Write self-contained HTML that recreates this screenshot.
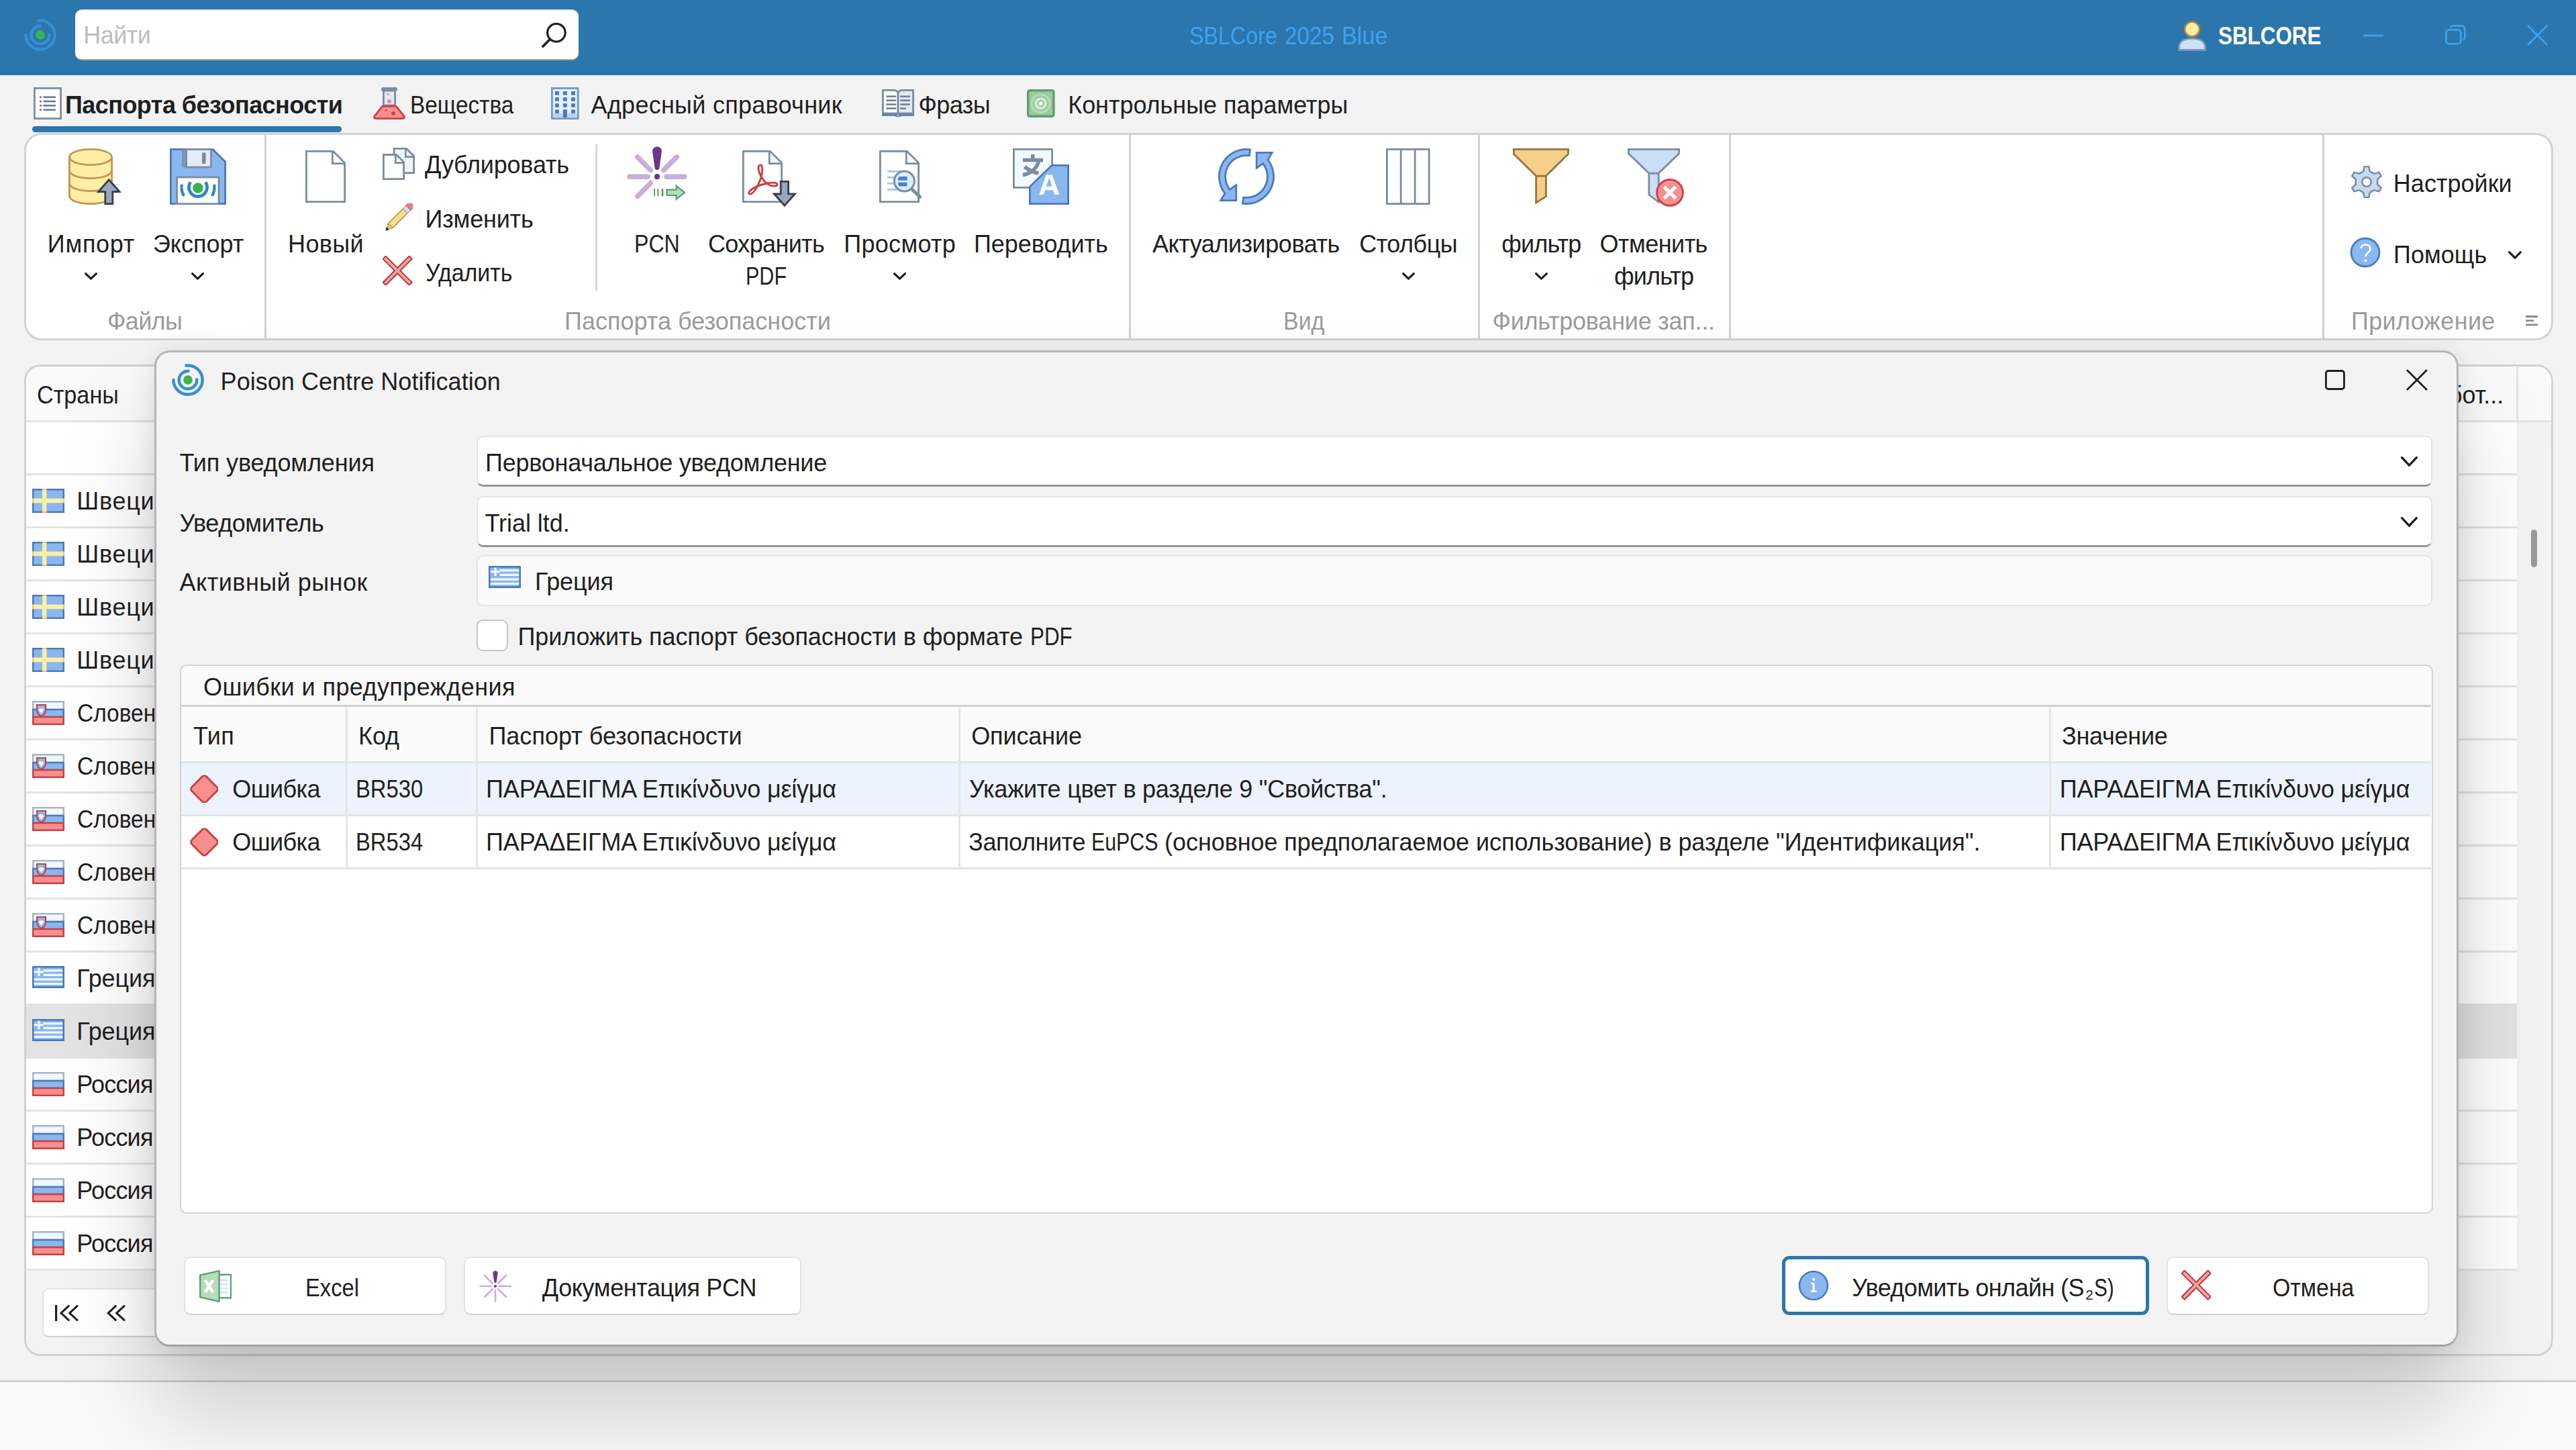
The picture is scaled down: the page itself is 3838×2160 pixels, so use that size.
<!DOCTYPE html>
<html lang="ru"><head><meta charset="utf-8"><title>SBLCore 2025 Blue</title>
<style>
*{box-sizing:border-box;margin:0;padding:0}
html,body{width:3838px;height:2160px;overflow:hidden;background:#f3f3f3}
body{position:relative;font-family:"Liberation Sans",sans-serif;color:#1f1f1f}
div,span.t,svg{position:absolute}
.t{white-space:pre;line-height:1;font-size:36px;transform-origin:0 0}
</style></head><body>
<!-- titlebar -->
<div id="titlebar" style="left:0;top:0;width:3838px;height:2160px">
<div style="left:0px;top:0px;width:3838px;height:112px;background:#2b76ac"></div>
<svg style="left:36px;top:28px" width="48" height="48" viewBox="0 0 48 48"><path d="M21.37 2.56 A21.6 21.6 0 1 1 2.40 24.00" fill="none" stroke="#378fd1" stroke-width="4.2" stroke-linecap="round"/><path d="M37.28 23.30 A13.3 13.3 0 1 1 24.46 10.71" fill="none" stroke="#378fd1" stroke-width="4.2" stroke-linecap="round"/><circle cx="24" cy="24" r="6.8" fill="#3cb44b"/></svg>
<div style="left:112px;top:14px;width:750px;height:76px;background:#fff;border-radius:10px;border-top:2.5px solid #e6e6e6;border-bottom:2.5px solid #a3a3a3"></div>
<svg style="left:803px;top:34px" width="42" height="40" viewBox="0 0 42 40"><circle cx="25.9" cy="14.8" r="13.3" fill="none" stroke="#1f1f1f" stroke-width="3.2"/><path d="M16.3 24.5 L4.8 36.2" stroke="#1f1f1f" stroke-width="3.6" fill="none"/></svg>
<svg style="left:3245px;top:31px" width="42" height="45" viewBox="0 0 42 45"><path d="M1.5 43.4 V40 C1.5 31 9 26.5 21 26.5 S40.5 31 40.5 40 V43.4 Z" fill="#c9e4f9" stroke="#8795c4" stroke-width="2.6"/><circle cx="21" cy="12.5" r="11" fill="#ffeea3" stroke="#a98a3d" stroke-width="2.6"/></svg>
<svg style="left:3521px;top:51.3px" width="30" height="4" viewBox="0 0 30 4"><path d="M0 2 H30" stroke="#3fa1ee" stroke-width="2.8"/></svg>
<svg style="left:3642.5px;top:37px" width="31" height="30" viewBox="0 0 31 30"><rect x="1.4" y="7.4" width="22" height="21" rx="4.5" fill="none" stroke="#3fa1ee" stroke-width="2.8"/><path d="M8 3.6 C8.6 2 10 1.4 12 1.4 H24 C27 1.4 29.4 3.6 29.4 6.6 V18 C29.4 20 28.6 21.6 26.8 22.2" fill="none" stroke="#3fa1ee" stroke-width="2.8"/></svg>
<svg style="left:3764.6px;top:36.5px" width="31" height="31" viewBox="0 0 31 31"><path d="M1 1 L30 30 M30 1 L1 30" stroke="#3fa1ee" stroke-width="2.8" fill="none"/></svg>
<span class="t" style="left:124.2px;top:35px;letter-spacing:-0.53px;color:#bdbdbd;">Найти</span>
<span class="t" style="left:1771.5px;top:36px;transform:scaleX(0.8955);color:#3fa1ee;">SBLCore</span>
<span class="t" style="left:1913.5px;top:36px;transform:scaleX(0.9249);color:#3fa1ee;">2025</span>
<span class="t" style="left:1999.4px;top:36px;transform:scaleX(0.9517);color:#3fa1ee;">Blue</span>
<span class="t" style="left:3305.0px;top:36px;transform:scaleX(0.8713);color:#fff;font-weight:700;">SBLCORE</span>
</div>
<!-- tabs -->
<div id="tabs" style="left:0;top:0;width:3838px;height:2160px">
<svg style="left:49.8px;top:130px" width="42" height="48" viewBox="0 0 42 48"><rect x="1.4" y="1.4" width="39.2" height="45.2" fill="#fff" stroke="#7a8da1" stroke-width="2.8"/><rect x="9" y="13.4" width="3" height="2.6" fill="#6b7c9a"/><rect x="14.5" y="13.4" width="18.5" height="2.6" fill="#6b7c9a"/><rect x="9" y="19.7" width="3" height="2.6" fill="#6b7c9a"/><rect x="14.5" y="19.7" width="18.5" height="2.6" fill="#6b7c9a"/><rect x="9" y="26.0" width="3" height="2.6" fill="#6b7c9a"/><rect x="14.5" y="26.0" width="18.5" height="2.6" fill="#6b7c9a"/><rect x="9" y="32.3" width="3" height="2.6" fill="#6b7c9a"/><rect x="14.5" y="32.3" width="18.5" height="2.6" fill="#6b7c9a"/></svg>
<div style="left:47.7px;top:187.8px;width:461.6px;height:9.2px;background:#2b76ac;border-radius:5px"></div>
<svg style="left:556px;top:130px" width="48" height="48" viewBox="0 0 48 48"><path d="M15.4 5 V27 H32.6 V5 Z" fill="#dfeaf5" stroke="#7a8da1" stroke-width="2.8"/><rect x="12" y="0" width="24" height="6" rx="2.5" fill="#7a8da1"/><path d="M13.6 28.4 H34.4 L46 43 C47 45 46 46.6 44 46.6 H4 C2 46.6 1 45 2 43 Z" fill="#f78f8f" stroke="#c74343" stroke-width="2.8" stroke-linejoin="round"/><circle cx="22.3" cy="10.4" r="1.6" fill="#f78f8f"/><circle cx="24" cy="21" r="3.1" fill="#f78f8f"/><circle cx="19.3" cy="34.2" r="1.4" fill="#c74343"/><circle cx="30" cy="38.8" r="2.9" fill="#c74343"/></svg>
<svg style="left:821.2px;top:130px" width="41.6" height="48" viewBox="0 0 41.6 48"><rect x="1.4" y="1.4" width="38.8" height="45.2" fill="#dff0fe" stroke="#7496c4" stroke-width="2.8"/><rect x="2.8" y="38.8" width="36" height="6.4" fill="#b9d5f2"/><rect x="6" y="6" width="5.9" height="5.6" fill="#4e7ab5"/><rect x="6" y="15.1" width="5.9" height="5.6" fill="#4e7ab5"/><rect x="6" y="24.2" width="5.9" height="5.6" fill="#4e7ab5"/><rect x="6" y="33.3" width="5.9" height="5.6" fill="#4e7ab5"/><rect x="17.9" y="6" width="5.9" height="5.6" fill="#4e7ab5"/><rect x="17.9" y="15.1" width="5.9" height="5.6" fill="#4e7ab5"/><rect x="17.9" y="24.2" width="5.9" height="5.6" fill="#4e7ab5"/><rect x="17.9" y="33.3" width="5.9" height="5.6" fill="#4e7ab5"/><rect x="30" y="6" width="5.9" height="5.6" fill="#4e7ab5"/><rect x="30" y="15.1" width="5.9" height="5.6" fill="#4e7ab5"/><rect x="30" y="24.2" width="5.9" height="5.6" fill="#4e7ab5"/><rect x="30" y="33.3" width="5.9" height="5.6" fill="#4e7ab5"/><rect x="17.9" y="33.3" width="5.9" height="11.9" fill="#4e7ab5"/></svg>
<svg style="left:1314px;top:133px" width="48" height="42" viewBox="0 0 48 42"><path d="M0 36.6 H48 V39.8 H28.4 C27.6 42 20.4 42 19.6 39.8 H0 Z" fill="#4e7ab5"/><circle cx="24" cy="38.6" r="2.3" fill="#8bb7f0"/><path d="M1.4 1.4 H17 C21 1.4 23.2 3.2 24 5.4 V36 H1.4 Z" fill="#fff" stroke="#7a8da1" stroke-width="2.8"/><path d="M46.6 1.4 H31 C27 1.4 24.8 3.2 24 5.4 V36 H46.6 Z" fill="#e0eaf3" stroke="#7a8da1" stroke-width="2.8"/><rect x="6.3" y="9.4" width="14.7" height="2.5" fill="#6b7c9a"/><rect x="27.2" y="9.4" width="14.7" height="2.5" fill="#6b7c9a"/><rect x="6.3" y="15.350000000000001" width="14.7" height="2.5" fill="#6b7c9a"/><rect x="27.2" y="15.350000000000001" width="14.7" height="2.5" fill="#6b7c9a"/><rect x="6.3" y="21.3" width="14.7" height="2.5" fill="#6b7c9a"/><rect x="27.2" y="21.3" width="14.7" height="2.5" fill="#6b7c9a"/><rect x="6.3" y="27.25" width="14.7" height="2.5" fill="#6b7c9a"/><rect x="27.2" y="27.25" width="8.7" height="2.5" fill="#6b7c9a"/></svg>
<svg style="left:1530.3px;top:133px" width="41.6" height="42" viewBox="0 0 41.6 42"><rect x="1.7" y="1.7" width="38.2" height="38.6" rx="2.5" fill="#9bcb9f" stroke="#5f9e6e" stroke-width="3.4"/><circle cx="20.6" cy="21.2" r="13.3" fill="none" stroke="#b9dcbb" stroke-width="2.8"/><circle cx="20.6" cy="21.2" r="7.3" fill="none" stroke="#d9edda" stroke-width="3.4"/><circle cx="20.6" cy="21.2" r="3" fill="#fff"/></svg>
<span class="t" style="left:96.9px;top:139px;letter-spacing:-0.54px;font-weight:700;">Паспорта безопасности</span>
<span class="t" style="left:611.0px;top:139px;transform:scaleX(0.9276);">Вещества</span>
<span class="t" style="left:880.5px;top:139px;letter-spacing:0.28px;">Адресный справочник</span>
<span class="t" style="left:1368.6px;top:139px;letter-spacing:-0.60px;">Фразы</span>
<span class="t" style="left:1591.2px;top:139px;letter-spacing:-0.03px;">Контрольные параметры</span>
</div>
<!-- ribbon -->
<div id="ribbon" style="left:0;top:0;width:3838px;height:2160px">
<div style="left:36px;top:198px;width:3768px;height:309px;background:#fff;border:3px solid #d2d2d2;border-radius:26px"></div>
<div style="left:393.5px;top:201px;width:3px;height:303px;background:#d2d2d2"></div>
<div style="left:1682px;top:201px;width:3px;height:303px;background:#d2d2d2"></div>
<div style="left:2201.5px;top:201px;width:3px;height:303px;background:#d2d2d2"></div>
<div style="left:2575.5px;top:201px;width:3px;height:303px;background:#d2d2d2"></div>
<div style="left:3459.5px;top:201px;width:3px;height:303px;background:#d2d2d2"></div>
<div style="left:887px;top:215px;width:2.5px;height:218px;background:#d8d8d8"></div>
<svg style="left:101.9px;top:221px" width="78" height="84" viewBox="0 0 78 84"><path d="M1.4 13 V71 C1.4 77.5 15.5 82.6 33 82.6 S64.6 77.5 64.6 71 V13" fill="#ffeea3" stroke="#c29653" stroke-width="2.8"/><ellipse cx="33" cy="13" rx="31.6" ry="11.6" fill="#ffeea3" stroke="#c29653" stroke-width="2.8"/><path d="M1.4 33 C1.4 39.5 15.5 44.6 33 44.6 S64.6 39.5 64.6 33" fill="none" stroke="#c29653" stroke-width="2.8"/><path d="M1.4 52 C1.4 58.5 15.5 63.6 33 63.6 S64.6 58.5 64.6 52" fill="none" stroke="#c29653" stroke-width="2.8"/><path d="M60.2 46.8 L76 64.6 H65.8 V82.6 H54.8 V64.6 H44.6 Z" fill="#98a7ba" stroke="#363f4f" stroke-width="2.8" stroke-linejoin="miter"/></svg>
<svg style="left:253px;top:221px" width="84" height="84" viewBox="0 0 84 84"><path d="M1.4 1.4 H64 L82.6 20 V82.6 H1.4 Z" fill="#8bb7f0" stroke="#4e7ab5" stroke-width="2.8"/><rect x="18" y="1.4" width="8" height="27" fill="#7c95c0"/><rect x="24.6" y="1.4" width="37" height="26.6" fill="#e3ecf5" stroke="#7a8da1" stroke-width="2.8"/><rect x="48" y="6.5" width="5.6" height="16.5" fill="#7a8da1"/><rect x="10.6" y="43" width="62.4" height="39.6" fill="#fff" stroke="#7a8da1" stroke-width="2.8"/><g fill="none" stroke="#2f86c9" stroke-linecap="butt"><path d="M53.14 50.20 A13.6 13.6 0 1 1 30.86 50.20" stroke-width="4.6"/><path d="M66.13 53.75 A24.5 24.5 0 0 1 62.78 70.98" stroke-width="4.2"/><path d="M21.22 70.98 A24.5 24.5 0 0 1 17.87 53.75" stroke-width="4.2"/></g><circle cx="42" cy="59" r="7.8" fill="#3cb44b"/></svg>
<svg style="left:455px;top:224px" width="60" height="78" viewBox="0 0 60 78"><path d="M1.4 1.4 H41.5 L58.6 18.5 V76.6 H1.4 Z" fill="#fff" stroke="#7a8da1" stroke-width="2.8"/><path d="M40.300000000000004 1.4 V19.7 H58.6" fill="none" stroke="#7a8da1" stroke-width="2.8"/></svg>
<svg style="left:570px;top:220px" width="48" height="48" viewBox="0 0 48 48"><g transform="translate(15.7 0)"><path d="M1.4 1.4 H19.9 L30.9 12.4 V37.6 H1.4 Z" fill="#edf6fe" stroke="#7a8da1" stroke-width="2.8"/><path d="M18.7 1.4 V13.600000000000001 H30.9" fill="none" stroke="#7a8da1" stroke-width="2.8"/></g><g transform="translate(0 9.1)"><path d="M1.4 1.4 H20.6 L31.6 12.4 V37.5 H1.4 Z" fill="#fff" stroke="#7a8da1" stroke-width="2.8"/><path d="M19.400000000000002 1.4 V13.600000000000001 H31.6" fill="none" stroke="#7a8da1" stroke-width="2.8"/></g></svg>
<svg style="left:573px;top:303px" width="42" height="42" viewBox="0 0 42 42"><g transform="translate(21 21) rotate(-45) translate(-28 -5.6)"><path d="M11 0.9 H42 V10.3 H11 L4 5.6 Z" fill="#fbe08a" stroke="#c29653" stroke-width="1.8" stroke-linejoin="round"/><path d="M11 0.9 L4 5.6 L11 10.3 Z" fill="#f5cd7f" stroke="#c29653" stroke-width="1.4" stroke-linejoin="round"/><path d="M0 5.6 L5.2 2.4 V8.8 Z" fill="#363f4f"/><rect x="42" y="0.9" width="6.6" height="9.4" fill="#d5dfee" stroke="#a8b4c8" stroke-width="1.4"/><path d="M48.6 0.9 H51.4 C57.4 0.9 57.4 10.3 51.4 10.3 H48.6 Z" fill="#f07f7f" stroke="#d86060" stroke-width="1.4"/></g></svg>
<svg style="left:570.2px;top:380.5px" width="44.4" height="44.4" viewBox="0 0 44.4 44.4"><g transform="translate(22.2 22.2) rotate(45)"><path d="M-27.6 -2.9 H27.6 V2.9 H-27.6 Z" fill="#f5a3a3" stroke="#bd383e" stroke-width="2.1"/></g><g transform="translate(22.2 22.2) rotate(-45)"><path d="M-27.6 -2.9 H27.6 V2.9 H-27.6 Z" fill="#f5a3a3" stroke="#bd383e" stroke-width="2.1"/></g><g transform="translate(22.2 22.2) rotate(45)"><path d="M-26.5 -1.85 H26.5 V1.85 H-26.5 Z" fill="#f5a3a3"/></g></svg>
<svg style="left:934px;top:217.6px" width="90" height="82" viewBox="0 0 90 82"><g transform="translate(45 45.2)"><path d="M-14.00 0.00 L-41.00 0.00" stroke="#c9aedb" stroke-width="7.4" stroke-linecap="round"/><path d="M14.00 0.00 L41.00 0.00" stroke="#c9aedb" stroke-width="7.4" stroke-linecap="round"/><path d="M-9.55 -9.55 L-29.34 -29.34" stroke="#c9aedb" stroke-width="7.4" stroke-linecap="round"/><path d="M9.55 -9.55 L29.34 -29.34" stroke="#c9aedb" stroke-width="7.4" stroke-linecap="round"/><path d="M-9.55 9.55 L-29.34 29.34" stroke="#c9aedb" stroke-width="7.4" stroke-linecap="round"/><path d="M-6.9 -38 C-6.9 -47 6.9 -47 6.9 -38 L3.4 -12.5 C3 -9.2 -3 -9.2 -3.4 -12.5 Z" fill="#6f358b"/><circle cx="0" cy="0" r="4.1" fill="#6f358b"/><g fill="#5c9e72"><rect x="-4.9" y="18" width="2" height="11.2"/><rect x="0.4" y="18" width="2" height="11.2"/><rect x="6.6" y="18" width="2.8" height="11.2"/></g><path d="M14.6 19.4 H28.6 V13.6 L41 23.6 L28.6 33.6 V27.8 H14.6 Z" fill="#b6dcb9" stroke="#5c9e72" stroke-width="2.2"/></g></svg>
<svg style="left:1106.2px;top:224.3px" width="82" height="84" viewBox="0 0 82 84"><path d="M1.4 1.4 H41.5 L58.6 18.5 V76.6 H1.4 Z" fill="#fff" stroke="#7a8da1" stroke-width="2.8"/><path d="M40.300000000000004 1.4 V19.7 H58.6" fill="none" stroke="#7a8da1" stroke-width="2.8"/><path d="M27.5 22 C23.5 21 23 27 25.5 33.5 C28 41 34 49 41 52 C46 54 52.5 53.5 52 50.5 C51.5 47.5 44 47.5 35.5 49.5 C26 51.5 17 55.5 12 59.5 C8 63 9.5 66.5 13.5 64.5 C18.5 62 24.5 51 27.5 41.5 C30 33.5 31 23 27.5 22 Z" fill="none" stroke="#c9403f" stroke-width="2.9" stroke-linejoin="round"/><g transform="translate(46.2 45)"><path d="M11 1.4 H22.4 V19.8 H32.2 L16.7 37.2 L1.2 19.8 H11 Z" fill="#98a7ba" stroke="#363f4f" stroke-width="2.8"/></g></svg>
<svg style="left:1310.1px;top:224.3px" width="64" height="78" viewBox="0 0 64 78"><path d="M1.4 1.4 H41.5 L58.6 18.5 V76.6 H1.4 Z" fill="#fff" stroke="#7a8da1" stroke-width="2.8"/><path d="M40.300000000000004 1.4 V19.7 H58.6" fill="none" stroke="#7a8da1" stroke-width="2.8"/><rect x="12" y="29.80" width="30" height="2.8" fill="#a8c4e8"/><rect x="12" y="38.85" width="30" height="2.8" fill="#a8c4e8"/><rect x="12" y="47.90" width="30" height="2.8" fill="#a8c4e8"/><rect x="12" y="56.95" width="30" height="2.8" fill="#a8c4e8"/><path d="M48 57.2 L60.6 69.2" stroke="#7a8da1" stroke-width="5" stroke-linecap="round"/><circle cx="37.4" cy="46" r="15" fill="#d9effc" stroke="#7a8da1" stroke-width="3"/><path d="M29.6 38.9 H41.6 V44.7 H27.6 C27.8 42 28.4 40.4 29.6 38.9 Z M27.6 47.8 H41.6 V53.6 H29.6 C28.4 52 27.8 50.4 27.6 47.8 Z" fill="#4a80c8"/></svg>
<svg style="left:1509px;top:221px" width="84" height="84" viewBox="0 0 84 84"><rect x="1.4" y="1.4" width="57.2" height="57" fill="#f2f9ff" stroke="#7a8da1" stroke-width="2.8"/><g fill="none" stroke="#7a8da1" stroke-width="5.6"><path d="M15 17.5 H45"/><path d="M29.8 9 V17"/><path d="M38.5 19 C36 30 27 37.5 15 39.5"/><path d="M17.5 27.5 C22 31 30 36 38.5 37"/></g><path d="M58 25.4 H82.6 V82.6 H25.4 V57 Z" fill="#8bb7f0" stroke="#4e7ab5" stroke-width="2.8"/><path d="M49.8 39.4 H58.6 L69.2 69 H62.4 L60.2 62.2 H48 L45.8 69 H39.2 Z M49.6 57 H58.6 L54.1 43.4 Z" fill="#fff" fill-rule="evenodd"/></svg>
<svg style="left:1815px;top:221px" width="84" height="84" viewBox="0 0 84 84"><path d="M47.65 1.80 A40.6 40.6 0 0 0 10.01 67.00 L3.8 77.6 H26.8 V54.6 L17.26 61.33 A31.4 31.4 0 0 1 46.37 10.91 Z" fill="#8bb7f0" stroke="#4e7ab5" stroke-width="2.8" stroke-linejoin="miter"/><path d="M36.35 82.20 A40.6 40.6 0 0 0 73.99 17.00 L80.2 6.4 H57.2 V29.4 L66.74 22.67 A31.4 31.4 0 0 1 37.63 73.09 Z" fill="#8bb7f0" stroke="#4e7ab5" stroke-width="2.8"/></svg>
<svg style="left:2065.2px;top:221px" width="65.6" height="84" viewBox="0 0 65.6 84"><rect x="1.4" y="1.4" width="62.8" height="81.2" fill="#fff" stroke="#7a8da1" stroke-width="2.8"/><path d="M22.2 1.4 V82.6 M43.2 1.4 V82.6" stroke="#7a8da1" stroke-width="2.8"/></svg>
<svg style="left:2254px;top:221px" width="84" height="84" viewBox="0 0 84 84"><path d="M1.4 1.4 H82.5 V8.4 L49.4 41 V71.6 L34.6 81 V41 L1.4 8.4 Z" fill="#f5cf87" stroke="#93753f" stroke-width="2.8"/><path d="M34.6 41.2 H49.4" stroke="#93753f" stroke-width="2.8"/></svg>
<svg style="left:2425px;top:221px" width="84" height="87" viewBox="0 0 84 87"><path d="M1.4 1.4 H76.5 V7.8 L46.2 37 V80 L31.8 69 V37 L1.4 7.8 Z" fill="#cadef5" stroke="#7a8da1" stroke-width="2.8"/><path d="M31.8 37.2 H46.2" stroke="#7a8da1" stroke-width="2.8"/><circle cx="63" cy="65.9" r="19.4" fill="#f78f8f" stroke="#c74343" stroke-width="2.9"/><path d="M54.4 57.3 L71.6 74.5 M71.6 57.3 L54.4 74.5" stroke="#fff" stroke-width="5.2"/></svg>
<svg style="left:3502px;top:247px" width="48" height="48" viewBox="0 0 48 48"><path d="M19.15 8.13 L20.74 0.83 L27.26 0.83 L28.85 8.13 L35.32 11.86 L42.44 9.59 L45.70 15.23 L40.17 20.27 L40.17 27.73 L45.70 32.77 L42.44 38.41 L35.32 36.14 L28.85 39.87 L27.26 47.17 L20.74 47.17 L19.15 39.87 L12.68 36.14 L5.56 38.41 L2.30 32.77 L7.83 27.73 L7.83 20.27 L2.30 15.23 L5.56 9.59 L12.68 11.86 Z" fill="#c5daf2" stroke="#7a8da1" stroke-width="2.5" stroke-linejoin="round"/><circle cx="24" cy="24" r="6.8" fill="#fff" stroke="#7a8da1" stroke-width="2.6"/></svg>
<svg style="left:3501.3px;top:352.6px" width="46" height="46" viewBox="0 0 46 46"><circle cx="23" cy="23" r="21" fill="#8bb7f0" stroke="#4e7ab5" stroke-width="2.8"/><path d="M16.6 17 C16.6 9.4 30.6 9.6 30.6 17.6 C30.6 23 23.6 23.4 23.6 29.6" fill="none" stroke="#fff" stroke-width="2.6"/><circle cx="23.5" cy="35.2" r="2.1" fill="#fff"/></svg>
<svg style="left:3763px;top:469.5px" width="18" height="16" viewBox="0 0 18 16"><path d="M0 1.5 H18 M0 7.7 H12 M0 13.9 H18" stroke="#8a8a8a" stroke-width="2.8"/></svg>
<svg style="left:125.5px;top:405.5px" width="19" height="11" viewBox="0 0 19 11"><path d="M1.6 1.6 L9.5 9.2 L17.4 1.6" fill="none" stroke="#1f1f1f" stroke-width="3.2" stroke-linecap="round" stroke-linejoin="round"/></svg>
<svg style="left:285.2px;top:405.5px" width="19" height="11" viewBox="0 0 19 11"><path d="M1.6 1.6 L9.5 9.2 L17.4 1.6" fill="none" stroke="#1f1f1f" stroke-width="3.2" stroke-linecap="round" stroke-linejoin="round"/></svg>
<svg style="left:1331.1px;top:405.5px" width="19" height="11" viewBox="0 0 19 11"><path d="M1.6 1.6 L9.5 9.2 L17.4 1.6" fill="none" stroke="#1f1f1f" stroke-width="3.2" stroke-linecap="round" stroke-linejoin="round"/></svg>
<svg style="left:2088.5px;top:405.5px" width="19" height="11" viewBox="0 0 19 11"><path d="M1.6 1.6 L9.5 9.2 L17.4 1.6" fill="none" stroke="#1f1f1f" stroke-width="3.2" stroke-linecap="round" stroke-linejoin="round"/></svg>
<svg style="left:2286.5px;top:405.5px" width="19" height="11" viewBox="0 0 19 11"><path d="M1.6 1.6 L9.5 9.2 L17.4 1.6" fill="none" stroke="#1f1f1f" stroke-width="3.2" stroke-linecap="round" stroke-linejoin="round"/></svg>
<svg style="left:3737px;top:373.5px" width="20" height="12" viewBox="0 0 20 12"><path d="M1.6 1.6 L10.0 10.2 L18.4 1.6" fill="none" stroke="#1f1f1f" stroke-width="3.2" stroke-linecap="round" stroke-linejoin="round"/></svg>
<span class="t" style="left:70.8px;top:346px;letter-spacing:0.73px;">Импорт</span>
<span class="t" style="left:228.0px;top:346px;letter-spacing:-0.01px;">Экспорт</span>
<span class="t" style="left:429.0px;top:346px;letter-spacing:0.40px;">Новый</span>
<span class="t" style="left:944.8px;top:346px;transform:scaleX(0.8915);">PCN</span>
<span class="t" style="left:1055.0px;top:346px;letter-spacing:-0.65px;">Сохранить</span>
<span class="t" style="left:1257.3px;top:346px;letter-spacing:0.30px;">Просмотр</span>
<span class="t" style="left:1451.0px;top:346px;letter-spacing:-0.05px;">Переводить</span>
<span class="t" style="left:1717.0px;top:346px;letter-spacing:-0.46px;">Актуализировать</span>
<span class="t" style="left:2025.3px;top:346px;letter-spacing:-0.51px;">Столбцы</span>
<span class="t" style="left:2237.3px;top:346px;letter-spacing:-0.85px;">фильтр</span>
<span class="t" style="left:2383.6px;top:346px;letter-spacing:-0.53px;">Отменить</span>
<span class="t" style="left:1111.3px;top:394px;transform:scaleX(0.8477);">PDF</span>
<span class="t" style="left:2405.1px;top:394px;letter-spacing:-0.85px;">фильтр</span>
<span class="t" style="left:632.9px;top:228px;letter-spacing:-0.18px;">Дублировать</span>
<span class="t" style="left:633.6px;top:309px;letter-spacing:-0.19px;">Изменить</span>
<span class="t" style="left:634.2px;top:389px;transform:scaleX(0.9423);">Удалить</span>
<span class="t" style="left:3565.8px;top:256px;letter-spacing:0.04px;">Настройки</span>
<span class="t" style="left:3566.0px;top:362px;letter-spacing:0.02px;">Помощь</span>
<span class="t" style="left:160.0px;top:461px;letter-spacing:-0.63px;color:#9b9b9b;">Файлы</span>
<span class="t" style="left:841.0px;top:461px;letter-spacing:0.03px;color:#9b9b9b;">Паспорта безопасности</span>
<span class="t" style="left:1911.6px;top:461px;transform:scaleX(0.9426);color:#9b9b9b;">Вид</span>
<span class="t" style="left:2223.6px;top:461px;letter-spacing:-0.24px;color:#9b9b9b;">Фильтрование зап...</span>
<span class="t" style="left:3503.0px;top:461px;letter-spacing:0.36px;color:#9b9b9b;">Приложение</span>
</div>
<!-- grid -->
<div id="grid" style="left:0;top:0;width:3838px;height:2160px">
<div style="left:36px;top:543px;width:3768px;height:1477px;background:#f3f3f3;border:3px solid #d2d2d2;border-radius:24px;overflow:hidden"></div>
<div style="left:39px;top:546px;width:3762px;height:81px;background:#f9f9f9;border-radius:21px 21px 0 0"></div>
<div style="left:39px;top:627px;width:3762px;height:1264.4px;background:#fff"></div>
<div style="left:3750px;top:627px;width:51px;height:1264.4px;background:#f3f3f3"></div>
<div style="left:39px;top:625.5px;width:3762px;height:3px;background:#e4e4e4"></div>
<div style="left:3749px;top:545px;width:3px;height:82px;background:#e4e4e4"></div>
<div style="left:39px;top:704.9px;width:3711px;height:3px;background:#e4e4e4"></div>
<svg style="left:48px;top:728.1px" width="48" height="36" viewBox="0 0 48 36"><rect x="1.25" y="1.25" width="45.5" height="33.5" fill="#8bb7f0" stroke="#4e7ab5" stroke-width="2.5"/><rect x="15" y="0.4" width="6.4" height="35.2" fill="#ffeea3"/><rect x="0.4" y="14.6" width="47.2" height="6.6" fill="#ffeea3"/><g fill="#f3c27a"><rect x="15" y="0" width="6.4" height="2"/><rect x="15" y="34" width="6.4" height="2"/><rect x="0" y="14.6" width="2" height="6.6"/><rect x="46" y="14.6" width="2" height="6.6"/></g></svg>
<div style="left:39px;top:783.9px;width:3711px;height:3px;background:#e4e4e4"></div>
<svg style="left:48px;top:807.1px" width="48" height="36" viewBox="0 0 48 36"><rect x="1.25" y="1.25" width="45.5" height="33.5" fill="#8bb7f0" stroke="#4e7ab5" stroke-width="2.5"/><rect x="15" y="0.4" width="6.4" height="35.2" fill="#ffeea3"/><rect x="0.4" y="14.6" width="47.2" height="6.6" fill="#ffeea3"/><g fill="#f3c27a"><rect x="15" y="0" width="6.4" height="2"/><rect x="15" y="34" width="6.4" height="2"/><rect x="0" y="14.6" width="2" height="6.6"/><rect x="46" y="14.6" width="2" height="6.6"/></g></svg>
<div style="left:39px;top:862.9px;width:3711px;height:3px;background:#e4e4e4"></div>
<svg style="left:48px;top:886.1px" width="48" height="36" viewBox="0 0 48 36"><rect x="1.25" y="1.25" width="45.5" height="33.5" fill="#8bb7f0" stroke="#4e7ab5" stroke-width="2.5"/><rect x="15" y="0.4" width="6.4" height="35.2" fill="#ffeea3"/><rect x="0.4" y="14.6" width="47.2" height="6.6" fill="#ffeea3"/><g fill="#f3c27a"><rect x="15" y="0" width="6.4" height="2"/><rect x="15" y="34" width="6.4" height="2"/><rect x="0" y="14.6" width="2" height="6.6"/><rect x="46" y="14.6" width="2" height="6.6"/></g></svg>
<div style="left:39px;top:941.9px;width:3711px;height:3px;background:#e4e4e4"></div>
<svg style="left:48px;top:965.1px" width="48" height="36" viewBox="0 0 48 36"><rect x="1.25" y="1.25" width="45.5" height="33.5" fill="#8bb7f0" stroke="#4e7ab5" stroke-width="2.5"/><rect x="15" y="0.4" width="6.4" height="35.2" fill="#ffeea3"/><rect x="0.4" y="14.6" width="47.2" height="6.6" fill="#ffeea3"/><g fill="#f3c27a"><rect x="15" y="0" width="6.4" height="2"/><rect x="15" y="34" width="6.4" height="2"/><rect x="0" y="14.6" width="2" height="6.6"/><rect x="46" y="14.6" width="2" height="6.6"/></g></svg>
<div style="left:39px;top:1020.9px;width:3711px;height:3px;background:#e4e4e4"></div>
<svg style="left:48px;top:1044.1px" width="48" height="36" viewBox="0 0 48 36"><rect x="1.25" y="1.25" width="45.5" height="11.75" fill="#f0f7ff" stroke="#a5b5cc" stroke-width="2.5"/><rect x="1.25" y="13" width="45.5" height="11" fill="#8bb7f0" stroke="#4e7ab5" stroke-width="2.5"/><rect x="1.25" y="24" width="45.5" height="10.75" fill="#f78f8f" stroke="#c74343" stroke-width="2.5"/><path d="M7 6 H20 V14 C20 19 15.5 22 13.5 23 C11.5 22 7 19 7 14 Z" fill="#8bb7f0" stroke="#c74343" stroke-width="2.2"/><path d="M9.6 13.6 L12 10.6 L13.5 12.6 L15 10.6 L17.4 13.6 L13.5 19 Z" fill="#fff"/></svg>
<div style="left:39px;top:1099.9px;width:3711px;height:3px;background:#e4e4e4"></div>
<svg style="left:48px;top:1123.1000000000001px" width="48" height="36" viewBox="0 0 48 36"><rect x="1.25" y="1.25" width="45.5" height="11.75" fill="#f0f7ff" stroke="#a5b5cc" stroke-width="2.5"/><rect x="1.25" y="13" width="45.5" height="11" fill="#8bb7f0" stroke="#4e7ab5" stroke-width="2.5"/><rect x="1.25" y="24" width="45.5" height="10.75" fill="#f78f8f" stroke="#c74343" stroke-width="2.5"/><path d="M7 6 H20 V14 C20 19 15.5 22 13.5 23 C11.5 22 7 19 7 14 Z" fill="#8bb7f0" stroke="#c74343" stroke-width="2.2"/><path d="M9.6 13.6 L12 10.6 L13.5 12.6 L15 10.6 L17.4 13.6 L13.5 19 Z" fill="#fff"/></svg>
<div style="left:39px;top:1178.9px;width:3711px;height:3px;background:#e4e4e4"></div>
<svg style="left:48px;top:1202.1000000000001px" width="48" height="36" viewBox="0 0 48 36"><rect x="1.25" y="1.25" width="45.5" height="11.75" fill="#f0f7ff" stroke="#a5b5cc" stroke-width="2.5"/><rect x="1.25" y="13" width="45.5" height="11" fill="#8bb7f0" stroke="#4e7ab5" stroke-width="2.5"/><rect x="1.25" y="24" width="45.5" height="10.75" fill="#f78f8f" stroke="#c74343" stroke-width="2.5"/><path d="M7 6 H20 V14 C20 19 15.5 22 13.5 23 C11.5 22 7 19 7 14 Z" fill="#8bb7f0" stroke="#c74343" stroke-width="2.2"/><path d="M9.6 13.6 L12 10.6 L13.5 12.6 L15 10.6 L17.4 13.6 L13.5 19 Z" fill="#fff"/></svg>
<div style="left:39px;top:1257.9px;width:3711px;height:3px;background:#e4e4e4"></div>
<svg style="left:48px;top:1281.1000000000001px" width="48" height="36" viewBox="0 0 48 36"><rect x="1.25" y="1.25" width="45.5" height="11.75" fill="#f0f7ff" stroke="#a5b5cc" stroke-width="2.5"/><rect x="1.25" y="13" width="45.5" height="11" fill="#8bb7f0" stroke="#4e7ab5" stroke-width="2.5"/><rect x="1.25" y="24" width="45.5" height="10.75" fill="#f78f8f" stroke="#c74343" stroke-width="2.5"/><path d="M7 6 H20 V14 C20 19 15.5 22 13.5 23 C11.5 22 7 19 7 14 Z" fill="#8bb7f0" stroke="#c74343" stroke-width="2.2"/><path d="M9.6 13.6 L12 10.6 L13.5 12.6 L15 10.6 L17.4 13.6 L13.5 19 Z" fill="#fff"/></svg>
<div style="left:39px;top:1336.9px;width:3711px;height:3px;background:#e4e4e4"></div>
<svg style="left:48px;top:1360.1000000000001px" width="48" height="36" viewBox="0 0 48 36"><rect x="1.25" y="1.25" width="45.5" height="11.75" fill="#f0f7ff" stroke="#a5b5cc" stroke-width="2.5"/><rect x="1.25" y="13" width="45.5" height="11" fill="#8bb7f0" stroke="#4e7ab5" stroke-width="2.5"/><rect x="1.25" y="24" width="45.5" height="10.75" fill="#f78f8f" stroke="#c74343" stroke-width="2.5"/><path d="M7 6 H20 V14 C20 19 15.5 22 13.5 23 C11.5 22 7 19 7 14 Z" fill="#8bb7f0" stroke="#c74343" stroke-width="2.2"/><path d="M9.6 13.6 L12 10.6 L13.5 12.6 L15 10.6 L17.4 13.6 L13.5 19 Z" fill="#fff"/></svg>
<div style="left:39px;top:1415.9px;width:3711px;height:3px;background:#e4e4e4"></div>
<svg style="left:48px;top:1439.1000000000001px" width="48" height="33" viewBox="0 0 48 33"><rect x="1.35" y="1.35" width="45.3" height="30.3" fill="#8bb7f0" stroke="#4e7ab5" stroke-width="2.7"/><rect x="2.7" y="5.2" width="42.6" height="3.2" fill="#f2f8ff"/><rect x="2.7" y="11.8" width="42.6" height="3.2" fill="#f2f8ff"/><rect x="2.7" y="18.4" width="42.6" height="3.2" fill="#f2f8ff"/><rect x="2.7" y="25" width="42.6" height="3.2" fill="#f2f8ff"/><rect x="2.7" y="2.7" width="14" height="12.3" fill="#8bb7f0"/><rect x="8.4" y="2.7" width="3.2" height="12.3" fill="#f2f8ff"/><rect x="2.7" y="7.2" width="14" height="3.2" fill="#f2f8ff"/></svg>
<div style="left:39px;top:1494.9px;width:3711px;height:3px;background:#e4e4e4"></div>
<div style="left:39px;top:1494.9px;width:3711px;height:82px;background:#e3e3e3"></div>
<svg style="left:48px;top:1518.1000000000001px" width="48" height="33" viewBox="0 0 48 33"><rect x="1.35" y="1.35" width="45.3" height="30.3" fill="#8bb7f0" stroke="#4e7ab5" stroke-width="2.7"/><rect x="2.7" y="5.2" width="42.6" height="3.2" fill="#f2f8ff"/><rect x="2.7" y="11.8" width="42.6" height="3.2" fill="#f2f8ff"/><rect x="2.7" y="18.4" width="42.6" height="3.2" fill="#f2f8ff"/><rect x="2.7" y="25" width="42.6" height="3.2" fill="#f2f8ff"/><rect x="2.7" y="2.7" width="14" height="12.3" fill="#8bb7f0"/><rect x="8.4" y="2.7" width="3.2" height="12.3" fill="#f2f8ff"/><rect x="2.7" y="7.2" width="14" height="3.2" fill="#f2f8ff"/></svg>
<div style="left:39px;top:1573.9px;width:3711px;height:3px;background:#e4e4e4"></div>
<svg style="left:48px;top:1597.1000000000001px" width="48" height="36" viewBox="0 0 48 36"><rect x="1.25" y="1.25" width="45.5" height="11.75" fill="#f0f7ff" stroke="#a5b5cc" stroke-width="2.5"/><rect x="1.25" y="13" width="45.5" height="11" fill="#8bb7f0" stroke="#4e7ab5" stroke-width="2.5"/><rect x="1.25" y="24" width="45.5" height="10.75" fill="#f78f8f" stroke="#c74343" stroke-width="2.5"/></svg>
<div style="left:39px;top:1652.9px;width:3711px;height:3px;background:#e4e4e4"></div>
<svg style="left:48px;top:1676.1000000000001px" width="48" height="36" viewBox="0 0 48 36"><rect x="1.25" y="1.25" width="45.5" height="11.75" fill="#f0f7ff" stroke="#a5b5cc" stroke-width="2.5"/><rect x="1.25" y="13" width="45.5" height="11" fill="#8bb7f0" stroke="#4e7ab5" stroke-width="2.5"/><rect x="1.25" y="24" width="45.5" height="10.75" fill="#f78f8f" stroke="#c74343" stroke-width="2.5"/></svg>
<div style="left:39px;top:1731.9px;width:3711px;height:3px;background:#e4e4e4"></div>
<svg style="left:48px;top:1755.1000000000001px" width="48" height="36" viewBox="0 0 48 36"><rect x="1.25" y="1.25" width="45.5" height="11.75" fill="#f0f7ff" stroke="#a5b5cc" stroke-width="2.5"/><rect x="1.25" y="13" width="45.5" height="11" fill="#8bb7f0" stroke="#4e7ab5" stroke-width="2.5"/><rect x="1.25" y="24" width="45.5" height="10.75" fill="#f78f8f" stroke="#c74343" stroke-width="2.5"/></svg>
<div style="left:39px;top:1810.9px;width:3711px;height:3px;background:#e4e4e4"></div>
<svg style="left:48px;top:1834.1000000000001px" width="48" height="36" viewBox="0 0 48 36"><rect x="1.25" y="1.25" width="45.5" height="11.75" fill="#f0f7ff" stroke="#a5b5cc" stroke-width="2.5"/><rect x="1.25" y="13" width="45.5" height="11" fill="#8bb7f0" stroke="#4e7ab5" stroke-width="2.5"/><rect x="1.25" y="24" width="45.5" height="10.75" fill="#f78f8f" stroke="#c74343" stroke-width="2.5"/></svg>
<div style="left:39px;top:1889.9px;width:3711px;height:3px;background:#e4e4e4"></div>
<div style="left:3771px;top:789px;width:9.2px;height:56px;background:#9b9b9b;border-radius:5px"></div>
<div style="left:63.3px;top:1919.4px;width:420px;height:73px;background:#fff;border:2.5px solid #e3e3e3;border-bottom-color:#cfcfcf;border-radius:10px"></div>
<svg style="left:82.2px;top:1944px" width="35" height="24" viewBox="0 0 35 24"><path d="M1.6 0 V24" stroke="#1f1f1f" stroke-width="3.2"/><path d="M21.2 0.6 L9 12 L21.2 23.4 M34 0.6 L21.8 12 L34 23.4" fill="none" stroke="#1f1f1f" stroke-width="3"/></svg>
<svg style="left:158.5px;top:1944px" width="28" height="24" viewBox="0 0 28 24"><path d="M14.4 0.6 L2.2 12 L14.4 23.4 M27 0.6 L14.8 12 L27 23.4" fill="none" stroke="#1f1f1f" stroke-width="3"/></svg>
<span class="t" style="left:55.4px;top:571px;transform:scaleX(0.9497);">Страны</span>
<span class="t" style="left:3648.0px;top:571px;letter-spacing:-0.03px;">бот...</span>
<span class="t" style="left:114.3px;top:729px;letter-spacing:0.71px;">Швеция</span>
<span class="t" style="left:114.3px;top:808px;letter-spacing:0.71px;">Швеция</span>
<span class="t" style="left:114.3px;top:887px;letter-spacing:0.71px;">Швеция</span>
<span class="t" style="left:114.3px;top:966px;letter-spacing:0.71px;">Швеция</span>
<span class="t" style="left:115.4px;top:1045px;transform:scaleX(0.9296);">Словения</span>
<span class="t" style="left:115.4px;top:1124px;transform:scaleX(0.9296);">Словения</span>
<span class="t" style="left:115.4px;top:1203px;transform:scaleX(0.9296);">Словения</span>
<span class="t" style="left:115.4px;top:1282px;transform:scaleX(0.9296);">Словения</span>
<span class="t" style="left:115.4px;top:1361px;transform:scaleX(0.9296);">Словения</span>
<span class="t" style="left:114.3px;top:1440px;letter-spacing:-0.11px;">Греция</span>
<span class="t" style="left:114.3px;top:1519px;letter-spacing:-0.11px;">Греция</span>
<span class="t" style="left:114.3px;top:1598px;letter-spacing:-0.79px;">Россия</span>
<span class="t" style="left:114.3px;top:1677px;letter-spacing:-0.79px;">Россия</span>
<span class="t" style="left:114.3px;top:1756px;letter-spacing:-0.79px;">Россия</span>
<span class="t" style="left:114.3px;top:1835px;letter-spacing:-0.79px;">Россия</span>
</div>
<!-- status -->
<div id="status" style="left:0;top:0;width:3838px;height:2160px">
<div style="left:0px;top:2056px;width:3838px;height:3px;background:#d0d0d0"></div>
<div style="left:0px;top:2059px;width:3838px;height:101px;background:#fafafa"></div>
</div>
<!-- dialog -->
<div id="dialog" style="left:0;top:0;width:3838px;height:2160px">
<div style="left:229.5px;top:522px;width:3433.5px;height:1484px;background:#f3f3f3;border:3px solid #b4b4b4;border-color:#b6b6b6 #b4b4b4 #a2a2a2 #b4b4b4;border-radius:23px;box-shadow:0 2px 40px rgba(0,0,0,.10),0 100px 140px rgba(0,0,0,.18)"></div>
<svg style="left:256px;top:542px" width="48" height="48" viewBox="0 0 48 48"><path d="M21.37 2.56 A21.6 21.6 0 1 1 2.40 24.00" fill="none" stroke="#378fd1" stroke-width="4.5" stroke-linecap="round"/><path d="M37.28 23.30 A13.3 13.3 0 1 1 24.46 10.71" fill="none" stroke="#378fd1" stroke-width="4.5" stroke-linecap="round"/><circle cx="24" cy="24" r="6.8" fill="#3cb44b"/></svg>
<svg style="left:3464.3px;top:550.5px" width="30" height="30" viewBox="0 0 30 30"><rect x="1.5" y="1.5" width="27" height="27" rx="3.5" fill="none" stroke="#1f1f1f" stroke-width="2.8"/></svg>
<svg style="left:3585.4px;top:549.7px" width="32" height="32" viewBox="0 0 32 32"><path d="M1 1 L31 31 M31 1 L1 31" stroke="#1f1f1f" stroke-width="2.8" fill="none"/></svg>
<div style="left:710.4px;top:648.6px;width:2913.6px;height:76.2px;background:#fff;border:2.5px solid #e3e3e3;border-bottom:3px solid #959595;border-radius:10px"></div>
<div style="left:710.4px;top:739.2px;width:2913.6px;height:76px;background:#fff;border:2.5px solid #e3e3e3;border-bottom:3px solid #959595;border-radius:10px"></div>
<div style="left:710.4px;top:827.4px;width:2913.6px;height:75.2px;background:#fafafa;border:2.5px solid #e4e4e4;border-radius:10px"></div>
<svg style="left:727.8px;top:843px" width="48" height="33" viewBox="0 0 48 33"><rect x="1.35" y="1.35" width="45.3" height="30.3" fill="#8bb7f0" stroke="#4e7ab5" stroke-width="2.7"/><rect x="2.7" y="5.2" width="42.6" height="3.2" fill="#f2f8ff"/><rect x="2.7" y="11.8" width="42.6" height="3.2" fill="#f2f8ff"/><rect x="2.7" y="18.4" width="42.6" height="3.2" fill="#f2f8ff"/><rect x="2.7" y="25" width="42.6" height="3.2" fill="#f2f8ff"/><rect x="2.7" y="2.7" width="14" height="12.3" fill="#8bb7f0"/><rect x="8.4" y="2.7" width="3.2" height="12.3" fill="#f2f8ff"/><rect x="2.7" y="7.2" width="14" height="3.2" fill="#f2f8ff"/></svg>
<svg style="left:3576.5px;top:680px" width="25" height="15" viewBox="0 0 25 15"><path d="M1.6 1.6 L12.5 13.2 L23.4 1.6" fill="none" stroke="#1f1f1f" stroke-width="3.4" stroke-linecap="round" stroke-linejoin="round"/></svg>
<svg style="left:3576.5px;top:770px" width="25" height="15" viewBox="0 0 25 15"><path d="M1.6 1.6 L12.5 13.2 L23.4 1.6" fill="none" stroke="#1f1f1f" stroke-width="3.4" stroke-linecap="round" stroke-linejoin="round"/></svg>
<div style="left:710.4px;top:922.5px;width:47px;height:47px;background:#fff;border:2.5px solid #c6c6c6;border-radius:9px"></div>
<div style="left:267.6px;top:990px;width:3357px;height:817.6px;background:#fff;border:2.8px solid #d2d2d2;border-radius:10px"></div>
<div style="left:270.4px;top:992.8px;width:3351.4px;height:58px;background:#fafafa;border-radius:7px 7px 0 0"></div>
<div style="left:270.4px;top:1050.2px;width:3351.4px;height:3px;background:#d0d0d0"></div>
<div style="left:270.4px;top:1053px;width:3351.4px;height:81px;background:#fafafa"></div>
<div style="left:270.4px;top:1136.8px;width:3351.4px;height:76.4px;background:#ecf3fc"></div>
<div style="left:270.4px;top:1134px;width:3351.4px;height:2.8px;background:#e4e4e4"></div>
<div style="left:270.4px;top:1213px;width:3351.4px;height:2.8px;background:#e4e4e4"></div>
<div style="left:270.4px;top:1291.8px;width:3351.4px;height:2.8px;background:#e4e4e4"></div>
<div style="left:515px;top:1054px;width:2.8px;height:241px;background:#e5e5e5"></div>
<div style="left:709.2px;top:1054px;width:2.8px;height:241px;background:#e5e5e5"></div>
<div style="left:1428.2px;top:1054px;width:2.8px;height:241px;background:#e5e5e5"></div>
<div style="left:3053.1px;top:1054px;width:2.8px;height:241px;background:#e5e5e5"></div>
<svg style="left:282.5px;top:1153.7px" width="42.8" height="42.8" viewBox="0 0 42.8 42.8"><rect x="-15.3" y="-15.3" width="30.6" height="30.6" rx="4.4" transform="translate(21.4 21.4) rotate(45)" fill="#f78f8f" stroke="#c74343" stroke-width="2.9"/></svg>
<svg style="left:282.5px;top:1232.9px" width="42.8" height="42.8" viewBox="0 0 42.8 42.8"><rect x="-15.3" y="-15.3" width="30.6" height="30.6" rx="4.4" transform="translate(21.4 21.4) rotate(45)" fill="#f78f8f" stroke="#c74343" stroke-width="2.9"/></svg>
<div style="left:273.7px;top:1872px;width:391.8px;height:86.6px;background:#fff;border:2.5px solid #e3e3e3;border-bottom-color:#d2d2d2;border-radius:10px"></div>
<div style="left:691px;top:1872px;width:503px;height:86.6px;background:#fff;border:2.5px solid #e3e3e3;border-bottom-color:#d2d2d2;border-radius:10px"></div>
<div style="left:2655.4px;top:1871px;width:546.6px;height:88px;background:#fff;border:5.5px solid #2b76ac;border-radius:11px"></div>
<div style="left:3227.5px;top:1872px;width:391px;height:86.6px;background:#fff;border:2.5px solid #e3e3e3;border-bottom-color:#d2d2d2;border-radius:10px"></div>
<svg style="left:296.8px;top:1892px" width="48.4" height="48" viewBox="0 0 48.4 48"><rect x="28" y="6.8" width="19" height="34.6" fill="#fff" stroke="#5c9e72" stroke-width="2.4"/><rect x="31" y="13.4" width="11.6" height="3.2" fill="#d5e4f2"/><rect x="31" y="19.5" width="11.6" height="3.2" fill="#d5e4f2"/><rect x="31" y="25.6" width="11.6" height="3.2" fill="#d5e4f2"/><rect x="31" y="31.7" width="11.6" height="3.2" fill="#d5e4f2"/><path d="M1.2 7.6 L29.6 1.2 V46.8 L1.2 40.4 Z" fill="#b6dcb9" stroke="#5c9e72" stroke-width="2.4"/><path d="M8.8 15 L20.2 33 M20.2 15 L8.8 33" stroke="#fff" stroke-width="4.4"/></svg>
<svg style="left:714.2px;top:1891.8px" width="48" height="48" viewBox="0 0 48 48"><g transform="translate(24 24)"><path d="M-5.80 0.00 L-22.60 0.00" stroke="#c9aedb" stroke-width="2.7" stroke-linecap="round"/><path d="M5.80 0.00 L22.60 0.00" stroke="#c9aedb" stroke-width="2.7" stroke-linecap="round"/><path d="M-4.10 -4.10 L-15.98 -15.98" stroke="#c9aedb" stroke-width="2.7" stroke-linecap="round"/><path d="M4.10 -4.10 L15.98 -15.98" stroke="#c9aedb" stroke-width="2.7" stroke-linecap="round"/><path d="M-4.10 4.10 L-15.98 15.98" stroke="#c9aedb" stroke-width="2.7" stroke-linecap="round"/><path d="M4.10 4.10 L15.98 15.98" stroke="#c9aedb" stroke-width="2.7" stroke-linecap="round"/><path d="M0.00 5.80 L0.00 22.60" stroke="#c9aedb" stroke-width="2.7" stroke-linecap="round"/><path d="M-3.7 -19.5 C-3.7 -24.3 3.7 -24.3 3.7 -19.5 L1.6 -6 C1.4 -4.6 -1.4 -4.6 -1.6 -6 Z" fill="#6f358b"/><circle cx="0" cy="0" r="2.1" fill="#6f358b"/></g></svg>
<svg style="left:2678.6px;top:1891.6px" width="46" height="46" viewBox="0 0 46 46"><circle cx="23" cy="23" r="21" fill="#8bb7f0" stroke="#4e7ab5" stroke-width="2.6"/><circle cx="23" cy="13.6" r="2.2" fill="#fff"/><path d="M19.4 18.8 H24.7 V30.2 H27.6 V32.8 H18.6 V30.2 H21.6 V21.4 H19.4 Z" fill="#fff"/></svg>
<svg style="left:3250px;top:1892.3px" width="44.4" height="44.4" viewBox="0 0 44.4 44.4"><g transform="translate(22.2 22.2) rotate(45)"><path d="M-27.6 -2.9 H27.6 V2.9 H-27.6 Z" fill="#f5a3a3" stroke="#bd383e" stroke-width="2.1"/></g><g transform="translate(22.2 22.2) rotate(-45)"><path d="M-27.6 -2.9 H27.6 V2.9 H-27.6 Z" fill="#f5a3a3" stroke="#bd383e" stroke-width="2.1"/></g><g transform="translate(22.2 22.2) rotate(45)"><path d="M-26.5 -1.85 H26.5 V1.85 H-26.5 Z" fill="#f5a3a3"/></g></svg>
<span class="t" style="left:328.6px;top:551px;letter-spacing:0.04px;">Poison Centre Notification</span>
<span class="t" style="left:267.6px;top:672px;letter-spacing:-0.14px;">Тип уведомления</span>
<span class="t" style="left:267.6px;top:762px;letter-spacing:-0.41px;">Уведомитель</span>
<span class="t" style="left:267.6px;top:850px;letter-spacing:0.48px;">Активный рынок</span>
<span class="t" style="left:723.0px;top:672px;letter-spacing:-0.23px;">Первоначальное уведомление</span>
<span class="t" style="left:722.4px;top:762px;letter-spacing:-0.03px;">Trial ltd.</span>
<span class="t" style="left:796.9px;top:849px;letter-spacing:-0.13px;">Греция</span>
<span class="t" style="left:771.4px;top:931px;letter-spacing:-0.08px;">Приложить паспорт безопасности в формате</span>
<span class="t" style="left:1534.6px;top:931px;transform:scaleX(0.8709);">PDF</span>
<span class="t" style="left:303.0px;top:1006px;letter-spacing:0.43px;">Ошибки и предупреждения</span>
<span class="t" style="left:287.9px;top:1079px;letter-spacing:0.39px;">Тип</span>
<span class="t" style="left:534.0px;top:1079px;letter-spacing:-0.05px;">Код</span>
<span class="t" style="left:728.4px;top:1079px;letter-spacing:0.03px;">Паспорт безопасности</span>
<span class="t" style="left:1447.2px;top:1079px;letter-spacing:-0.13px;">Описание</span>
<span class="t" style="left:3071.9px;top:1079px;letter-spacing:-0.25px;">Значение</span>
<span class="t" style="left:346.3px;top:1158px;letter-spacing:-0.61px;">Ошибка</span>
<span class="t" style="left:530.3px;top:1158px;transform:scaleX(0.9108);">BR530</span>
<span class="t" style="left:724.1px;top:1158px;letter-spacing:-0.23px;">ΠΑΡΑΔΕΙΓΜΑ Επικίνδυνο μείγμα</span>
<span class="t" style="left:1444.1px;top:1158px;letter-spacing:-0.26px;">Укажите цвет в разделе 9 &quot;Свойства&quot;.</span>
<span class="t" style="left:3068.7px;top:1158px;letter-spacing:-0.23px;">ΠΑΡΑΔΕΙΓΜΑ Επικίνδυνο μείγμα</span>
<span class="t" style="left:346.3px;top:1237px;letter-spacing:-0.61px;">Ошибка</span>
<span class="t" style="left:530.3px;top:1237px;transform:scaleX(0.9108);">BR534</span>
<span class="t" style="left:724.1px;top:1237px;letter-spacing:-0.23px;">ΠΑΡΑΔΕΙΓΜΑ Επικίνδυνο μείγμα</span>
<span class="t" style="left:1443.1px;top:1237px;letter-spacing:-0.41px;">Заполните</span>
<span class="t" style="left:1626.1px;top:1237px;transform:scaleX(0.8423);">EuPCS</span>
<span class="t" style="left:1735.1px;top:1237px;letter-spacing:-0.07px;">(основное предполагаемое использование) в разделе &quot;Идентификация&quot;.</span>
<span class="t" style="left:3068.7px;top:1237px;letter-spacing:-0.23px;">ΠΑΡΑΔΕΙΓΜΑ Επικίνδυνο μείγμα</span>
<span class="t" style="left:455.2px;top:1901px;transform:scaleX(0.9080);">Excel</span>
<span class="t" style="left:807.8px;top:1901px;letter-spacing:-0.39px;">Документация PCN</span>
<span class="t" style="left:2759.3px;top:1901px;letter-spacing:-0.59px;">Уведомить онлайн (S</span>
<span class="t" style="left:3107.3px;top:1919px;font-size:20.5px;">2</span>
<span class="t" style="left:3119.9px;top:1901px;transform:scaleX(0.8270);">S)</span>
<span class="t" style="left:3385.9px;top:1901px;transform:scaleX(0.9400);">Отмена</span>
</div>
</body></html>
